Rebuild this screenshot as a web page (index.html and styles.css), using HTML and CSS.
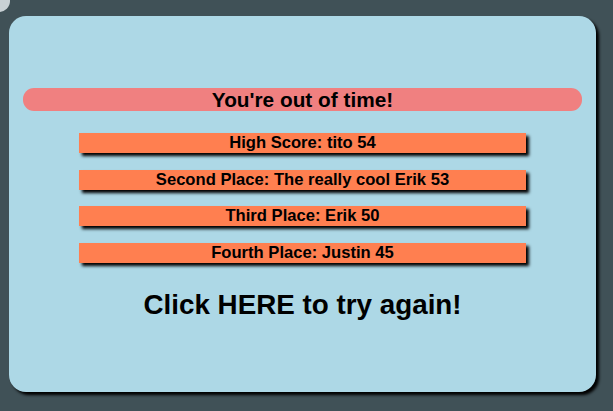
FILE: index.html
```html
<!DOCTYPE html>
<html>
<head>
<meta charset="utf-8">
<link rel="stylesheet" href="styles.css">
</head>
<body>
<div class="scores-link">Highscores</div>
<div class="card">
  <div class="banner">You're out of time!</div>
  <div class="list">
    <div class="entry">High Score: tito 54</div>
    <div class="entry">Second Place: The really cool Erik 53</div>
    <div class="entry">Third Place: Erik 50</div>
    <div class="entry">Fourth Place: Justin 45</div>
  </div>
  <div class="retry">Click HERE to try again!</div>
</div>
</body>
</html>
```
FILE: styles.css
```css
html, body {
  margin: 0;
  padding: 0;
  background: #405157;
  font-family: "Liberation Sans", Arial, sans-serif;
  font-weight: bold;
  color: #000;
}
body {
  position: relative;
  width: 613px;
  height: 411px;
  overflow: hidden;
}
.scores-link {
  position: absolute;
  left: -72px;
  top: -11px;
  width: 82px;
  height: 23px;
  border-radius: 11px;
  background: #c9d1d5;
  font-weight: normal;
  font-size: 12px;
  line-height: 14px;
  text-align: right;
  padding-right: 1px;
  box-sizing: border-box;
}
.card {
  margin: 16px 0 0 9px;
  width: 587px;
  height: 376px;
  box-sizing: border-box;
  background: #add8e6;
  border-radius: 17px;
  box-shadow: 3px 3px 3px #000;
  padding: 72px 14px 0;
  display: flex;
  flex-direction: column;
  align-items: center;
}
.banner {
  align-self: stretch;
  height: 23px;
  background: #f08080;
  border-radius: 11px;
  text-align: center;
  font-size: 20.8px;
  line-height: 23px;
}
.list {
  margin-top: 22px;
  display: flex;
  flex-direction: column;
  gap: 16.67px;
}
.entry {
  width: 447px;
  height: 20px;
  background: #ff7f50;
  box-shadow: 3px 3px 3px #000;
  text-align: center;
  font-size: 16.6px;
  line-height: 20px;
}
.retry {
  margin-top: 26px;
  font-size: 27.8px;
  line-height: 32px;
}
```
